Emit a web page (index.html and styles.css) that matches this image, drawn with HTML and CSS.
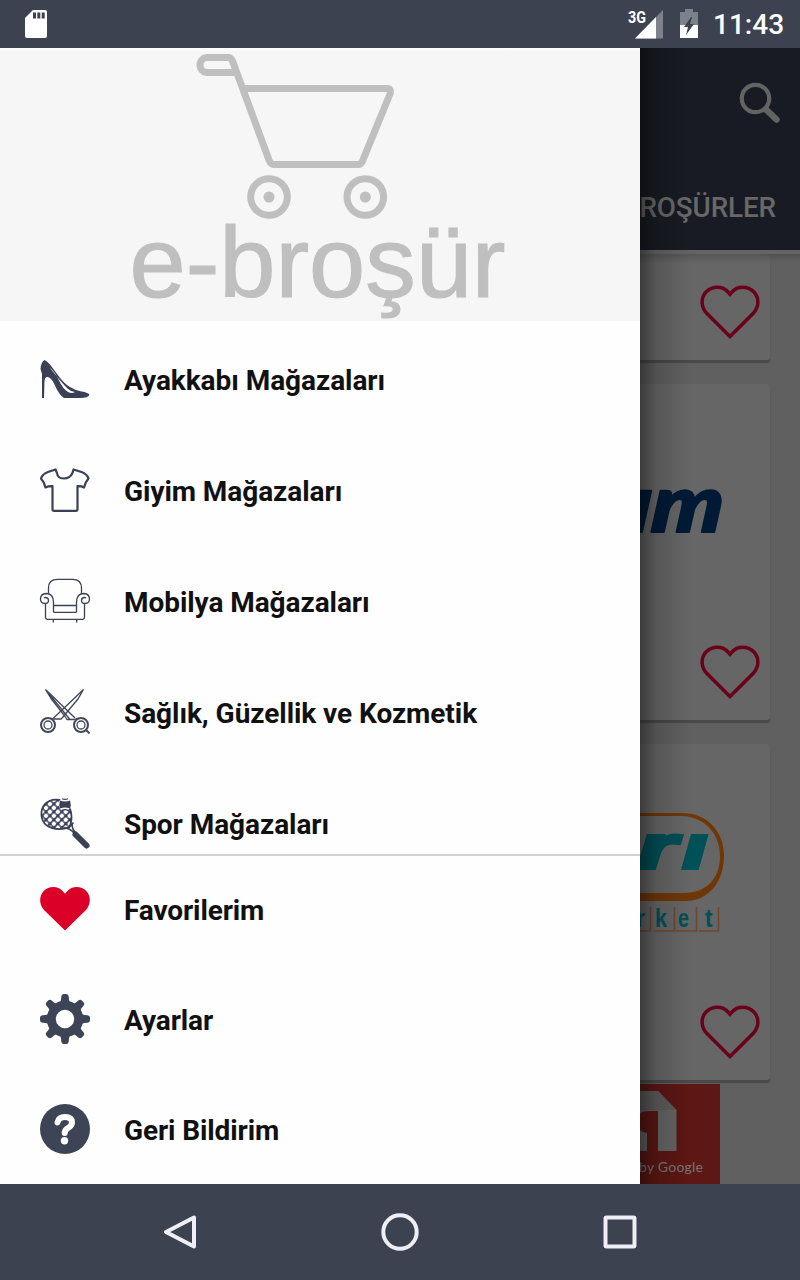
FILE: index.html
```html
<!DOCTYPE html>
<html lang="tr">
<head>
<meta charset="utf-8">
<title>e-broşür</title>
<link rel="stylesheet" href="styles.css">
</head>
<body>
<header class="status">
  <svg class="sd" width="24" height="30" viewBox="0 0 24 30"><path d="M9 1h12q2 0 2 2v24q0 2-2 2H3q-2 0-2-2V9z" fill="#fff"/><path d="M9 3.500h3v6H9zM13.300 3.500h3v6h-3zM17.700 3.500h3v6h-3z" fill="#3d4251"/></svg>
  <div class="status-right">
    <svg width="36" height="32" viewBox="0 0 36 32"><path d="M35 2v28.500H7z" fill="#7d818c"/><path d="M28 9v21.500H7z" fill="#fff"/><text x="0" y="14.500" class="net" textLength="18" lengthAdjust="spacingAndGlyphs">3G</text></svg>
    <svg class="battery" width="20" height="30" viewBox="0 0 20 30"><path d="M6 0h8v3h5v13H1V3h5z" fill="#7d818c"/><path d="M1 16h18v13H1z" fill="#fff"/><path d="M12 8 5 18h4l-2 8 8-11h-4l2-7z" fill="#3d4251"/></svg>
    <span class="clock">11:43</span>
  </div>
</header>
<main class="screen">
  <aside class="drawer">
    <div class="brand">
      <svg width="640" height="273" viewBox="0 48 640 273">
        <g fill="none" stroke="#bfbfbf" stroke-width="7" stroke-linejoin="round">
          <path d="M234 72.500h-26.500a7.300 7.300 0 0 1 0-15H228q3 0 4.500 3.500L269 160q1.500 4.500 5 4.500h84q3 0 4.500-3.500L390 94q1.500-5.500-3-5.500H244"/>
          <circle cx="269" cy="197" r="18.300"/><circle cx="365.300" cy="197" r="18.300"/>
        </g>
        <g fill="#bfbfbf"><circle cx="269" cy="197" r="5.500"/><circle cx="365.300" cy="197" r="5.500"/>
        <text x="129.500" y="296.500" class="wordmark" textLength="376" lengthAdjust="spacingAndGlyphs">e-broşür</text></g>
      </svg>
    </div>
    <nav class="stores">
      <a class="item"><svg class="icon" viewBox="0 0 50 50"><path fill="#3a4154" d="M4.500 5Q1 7 .5 14L2 19v24h2L4.500 26q0-3 2-4 4-1 7.500 6.500 5 11.500 10 14.500H40q8 0 9.500-3-1-2.500-8-3.500-6-1-11.500-4.500Q24 29 16 17.500T4.500 5z"/><path fill="#fefefe" d="M9.500 12Q19 25 27.500 33.500q3.500 3.300 7.500 3.500-3 2-7 0-5-3-9-11.500T9.500 12z"/></svg><span>Ayakkabı Mağazaları</span></a>
      <a class="item"><svg class="icon" viewBox="0 0 50 50"><path fill="none" stroke="#3a4154" stroke-width="2.200" stroke-linejoin="round" d="M15.500 3.500 8 6Q2.500 8 1 12.500q3.500 4 4.500 9 3-1.500 7-1.300V43q0 1.800 1.500 1.800h22q1.500 0 1.500-1.800V20.200q4-.2 6.500 1.300 1-5 4.500-9-1.500-4.500-7-6.500l-8-2.500-1 3.500q-2.500 5.500-8.700 5.500T17 7z"/></svg><span>Giyim Mağazaları</span></a>
      <a class="item"><svg class="icon" viewBox="0 0 50 50"><g fill="none" stroke="#3a4154" stroke-width="1.300" stroke-linejoin="round"><path d="M8.500 16V11q0-8.700 9-8.700h15q9 0 9 8.700v5"/><path d="M13.500 35.300V25.500q0-9-7.500-9-5.500.5-5.500 5.500 0 4.500 4.500 4.500 3.500 0 3.500-3t-3-3q-1 0-1.300.8M5.500 26.500v14q0 1.800 1.800 1.800h35.400q1.800 0 1.800-1.800V26.500M36.500 35.300V25.500q0-9 7.500-9 5.500.5 5.500 5.500 0 4.500-4.500 4.500-3.500 0-3.500-3t3-3q1 0 1.300.8M13.500 28.500h23M13.500 35.300h23M13.300 42.500v3M36.700 42.500v3"/></g></svg><span>Mobilya Mağazaları</span></a>
      <a class="item"><svg class="icon" viewBox="0 0 50 50"><g fill="none" stroke="#41475a" stroke-width="1.300" stroke-linejoin="round"><path d="M43.500 1.500 38 11 22.500 29.500 21 31h-7M43.500 1.500 32 12.500 12 31.500" /><path d="M5.500 1.500 11 10.500l13 16.500 3 4.500h7l3-1M5.500 1.500 17 12.500 35 30M5.500 1.500 30 31.500"/><circle cx="8" cy="37" r="7" stroke-width="2"/><circle cx="8" cy="37" r="4"/><circle cx="41" cy="37" r="7" stroke-width="2"/><circle cx="41" cy="37" r="4"/><path d="m46 42 3.500 3.500" stroke-width="1.800"/></g></svg><span>Sağlık, Güzellik ve Kozmetik</span></a>
      <a class="item"><svg class="icon" viewBox="0 0 50 50"><defs><pattern id="strings" width="5.600" height="5.600" patternUnits="userSpaceOnUse" patternTransform="translate(2 1) rotate(45)"><path fill="#3a4154" d="M0 0h5.600v5.600H0z"/><rect x=".8" y=".8" width="4" height="4" rx="1.300" fill="#fefefe"/></pattern></defs><path d="M1.500 17C.5 7 7 .7 16 .7c9 0 15.500 7.300 15.500 17.300 0 3-.5 7.500-2.500 10.500C18 32 3 30 1.500 17z" fill="url(#strings)" stroke="#3a4154" stroke-width="1.800"/><path d="m22 29.500 7-1 4.500-5M24 29q6 0 10 5M32 24q0 6 3 9" fill="none" stroke="#3a4154" stroke-width="1.600"/><path d="m35.500 35.500 11 11" stroke="#3a4154" stroke-width="6" stroke-linecap="round"/><circle cx="25" cy="5" r="6.500" fill="#fefefe"/><path d="M20 1.500q5 1.800 10 0 1.500 4 0 8-5-1.800-10 0-1.500-4 0-8z" fill="#3a4154"/><path d="M22-.2q3 1.200 6 0M22 11.200q3-1.200 6 0" fill="none" stroke="#3a4154" stroke-width="1.200"/></svg><span>Spor Mağazaları</span></a>
    </nav>
    <nav class="tools">
      <a class="item"><svg class="icon" viewBox="0 0 50 50"><path fill="#da0027" d="M25 46.500 4 26C-1 20.500-1 12 3.500 7.300 9 1.700 18 1.700 23 7.500l2 2.200 2-2.200C32 1.700 41 1.700 46.500 7.300 51 12 51 20.500 46 26z"/></svg><span>Favorilerim</span></a>
      <a class="item"><svg class="icon" viewBox="0 0 50 50"><circle cx="25" cy="25" r="13.700" fill="none" stroke="#3d4456" stroke-width="9"/><g fill="#3d4456"><g id="teeth"><path id="tooth" d="M19.500 9.500q1.300-1.500 1.500-4l.3-3Q21.500 0 23.800 0h2.400q2.300 0 2.500 2.500l.3 3q.2 2.500 1.500 4z"/><use href="#tooth" transform="rotate(90 25 25)"/><use href="#tooth" transform="rotate(180 25 25)"/><use href="#tooth" transform="rotate(270 25 25)"/></g><use href="#teeth" transform="rotate(45 25 25)"/></g></svg><span>Ayarlar</span></a>
      <a class="item"><svg class="icon" viewBox="0 0 50 50"><circle cx="25" cy="25" r="25" fill="#3d4456"/><path d="M17.500 18.500q1-5.500 7.500-5.500 7 0 7 5.500 0 3-4 5.500-3.300 2-3.300 5" fill="none" stroke="#fff" stroke-width="6" stroke-linecap="round"/><circle cx="24.500" cy="36.700" r="3.700" fill="#fff"/></svg><span>Geri Bildirim</span></a>
    </nav>
  </aside>
  <section class="page">
    <div class="appbar">
      <svg class="search" width="42" height="42" viewBox="0 0 42 42"><circle cx="16.500" cy="16.500" r="13.700" fill="none" stroke="#636362" stroke-width="4.200"/><path d="m27 27.500 10.500 10" stroke="#636362" stroke-width="6.500" stroke-linecap="round"/></svg>
      <span class="tab">BROŞÜRLER</span>
    </div>
    <div class="cards">
      <article class="card first"><svg class="heart" viewBox="0 0 60 54"><path d="M30 51.500 6.500 28C1 22 .5 13 6 7 12.500.5 22.500.5 28 7l2 2.300L32 7c5.500-6.500 15.500-6.500 22 0 5.500 6 5 15-.5 21z"/></svg></article>
      <article class="card"><svg class="logo" width="100" height="80" viewBox="640 470 100 80"><g class="logo-um" transform="translate(0 532) skewX(-5)"><text x="601" y="0" textLength="49" lengthAdjust="spacingAndGlyphs">u</text><text x="650" y="0" textLength="72" lengthAdjust="spacingAndGlyphs">m</text></g></svg><svg class="heart" viewBox="0 0 60 54"><path d="M30 51.500 6.500 28C1 22 .5 13 6 7 12.500.5 22.500.5 28 7l2 2.300L32 7c5.500-6.500 15.500-6.500 22 0 5.500 6 5 15-.5 21z"/></svg></article>
      <article class="card"><svg class="logo market" width="100" height="140" viewBox="640 800 100 140"><path fill="#703705" fill-rule="evenodd" d="M640 813h42c25 0 42 18 42 43s-15 45-38 45h-46v-8h44c22 0 36-14 36-37s-16-40-40-40h-40z"/><g class="logo-ari"><text x="597" y="868">a</text><text x="638" y="868" textLength="38" lengthAdjust="spacingAndGlyphs">r</text><text x="683" y="868" textLength="24" lengthAdjust="spacingAndGlyphs">ı</text></g><g fill="none" stroke="#704631" stroke-width="1.500"><path d="M630 931h20.500v-24M654 931h20.500v-24M676 931h20.500v-24M699 931h19.500v-24"/></g><g class="logo-market"><text x="636" y="927" textLength="9" lengthAdjust="spacingAndGlyphs">r</text><text x="655" y="927" textLength="12" lengthAdjust="spacingAndGlyphs">k</text><text x="678" y="927" textLength="11" lengthAdjust="spacingAndGlyphs">e</text><text x="705" y="927" textLength="7.500" lengthAdjust="spacingAndGlyphs">t</text></g></svg><svg class="heart" viewBox="0 0 60 54"><path d="M30 51.500 6.500 28C1 22 .5 13 6 7 12.500.5 22.500.5 28 7l2 2.300L32 7c5.500-6.500 15.500-6.500 22 0 5.500 6 5 15-.5 21z"/></svg></article>
    </div>
    <svg class="ad" width="80" height="100" viewBox="0 0 80 100"><path fill="#5d1714" d="M0 0h80v100H0z"/><path fill="#646464" d="M0 7h18l18.500 19v41H18V27H8Q2 27 0 30z"/><path fill="#5c5c5c" d="M0 7h18l18.500 19H0z"/><path fill="#646464" d="M0 46q3 3 7 3v18H0z"/><text x="-1" y="88" class="by" textLength="64">by Google</text></svg>
  </section>
</main>
<footer class="navbar">
  <svg width="40" height="40" viewBox="0 0 40 40"><path d="M34 5.500v29L6 20z"/></svg>
  <svg width="40" height="40" viewBox="0 0 40 40"><circle cx="20" cy="20" r="16.700"/></svg>
  <svg width="40" height="40" viewBox="0 0 40 40"><rect x="5.500" y="5.500" width="29" height="29" rx="1"/></svg>
</footer>
</body>
</html>
```
FILE: styles.css
```css
* { box-sizing: border-box; }
body { margin: 0; width: 800px; height: 1280px; display: flex; flex-direction: column; overflow: hidden; background: #606060; font-family: Roboto, sans-serif; }
svg { display: block; flex: none; }
.status { height: 48px; flex: none; display: flex; justify-content: space-between; background: #3d4251; padding: 0 16px 0 24px; }
.sd { margin-top: 9px; }
.status-right { display: flex; padding-top: 8px; }
.battery { margin: 1px 0 0 15px; }
.net { font: 700 16.500px Roboto, sans-serif; fill: #fff; }
.clock { margin-left: 14px; width: 71px; font-size: 28px; font-weight: 500; line-height: 34px; color: #fff; white-space: nowrap; }
.screen { height: 1136px; flex: none; display: flex; }
.drawer { width: 640px; flex: none; display: flex; flex-direction: column; background: #fefefe; }
.brand { height: 273px; flex: none; background: linear-gradient(#fff 0, #f6f6f6 4px); }
.wordmark { font: 101px "Liberation Sans", Arial, sans-serif; stroke: #bfbfbf; stroke-width: 1.200; }
.stores { height: 533px; flex: none; overflow: hidden; padding-top: 3px; }
.item { display: flex; align-items: center; height: 111px; padding-left: 40px; gap: 34px; color: #111; font-size: 28px; font-weight: 700; line-height: 32px; letter-spacing: -0.060px; white-space: nowrap; }
.item span { padding-top: 2px; }
.icon { width: 50px; height: 50px; overflow: visible; }
.tools { height: 330px; flex: none; box-shadow: inset 0 2px #d2d2d2; }
.tools .item { height: 110px; letter-spacing: -0.120px; }
.tools .item span { padding-top: 4px; }
.page { position: relative; width: 160px; flex: none; display: flex; flex-direction: column; overflow: hidden; background: #606060; }
.page::after { content: ""; position: absolute; inset: 0 auto 0 0; width: 50px; background: linear-gradient(90deg, rgba(0,0,0,.42), rgba(0,0,0,.16) 32%, transparent); }
.appbar { height: 206px; flex: none; display: flex; flex-direction: column; align-items: flex-end; background: #181b23; border-bottom: 4px solid #646464; padding-top: 34px; }
.search { margin-right: 19px; }
.tab { margin: 67px 24px 0 0; font-size: 27.800px; line-height: 33px; font-weight: 500; letter-spacing: -0.100px; color: #686869; white-space: nowrap; }
.cards { display: flex; flex-direction: column; gap: 24px; background: linear-gradient(#505050, #606060 8px); }
.card { width: 130px; height: 336px; display: flex; flex-direction: column; justify-content: flex-end; background: #666; border-radius: 0 4px 3px 0; box-shadow: 0 3px 1px #494949; padding: 0 10px 21px 0; }
.card.first { height: 106px; background: linear-gradient(#555, #666 9px); }
.heart { width: 60px; height: 54px; align-self: flex-end; fill: none; stroke: #6a0019; stroke-width: 3.500; }
.logo { margin-bottom: 95px; }
.market { margin-bottom: 65px; }
.logo-um { font: italic 900 80px Lato, sans-serif; fill: #001a36; stroke: #001a36; stroke-width: 2; stroke-linejoin: round; }
.logo-ari { font: italic 700 61px "Liberation Sans", sans-serif; fill: #005058; stroke: #005058; stroke-width: 4; }
.logo-market { font: 700 25px "Liberation Sans", sans-serif; fill: #005058; }
.ad { margin-top: 4px; }
.by { font: 14px Lato, sans-serif; fill: #777; }
.navbar { height: 96px; flex: none; display: flex; justify-content: center; align-items: center; gap: 180px; background: #3d4251; }
.navbar svg { fill: none; stroke: #eeeff5; stroke-width: 4; stroke-linejoin: round; }
```
